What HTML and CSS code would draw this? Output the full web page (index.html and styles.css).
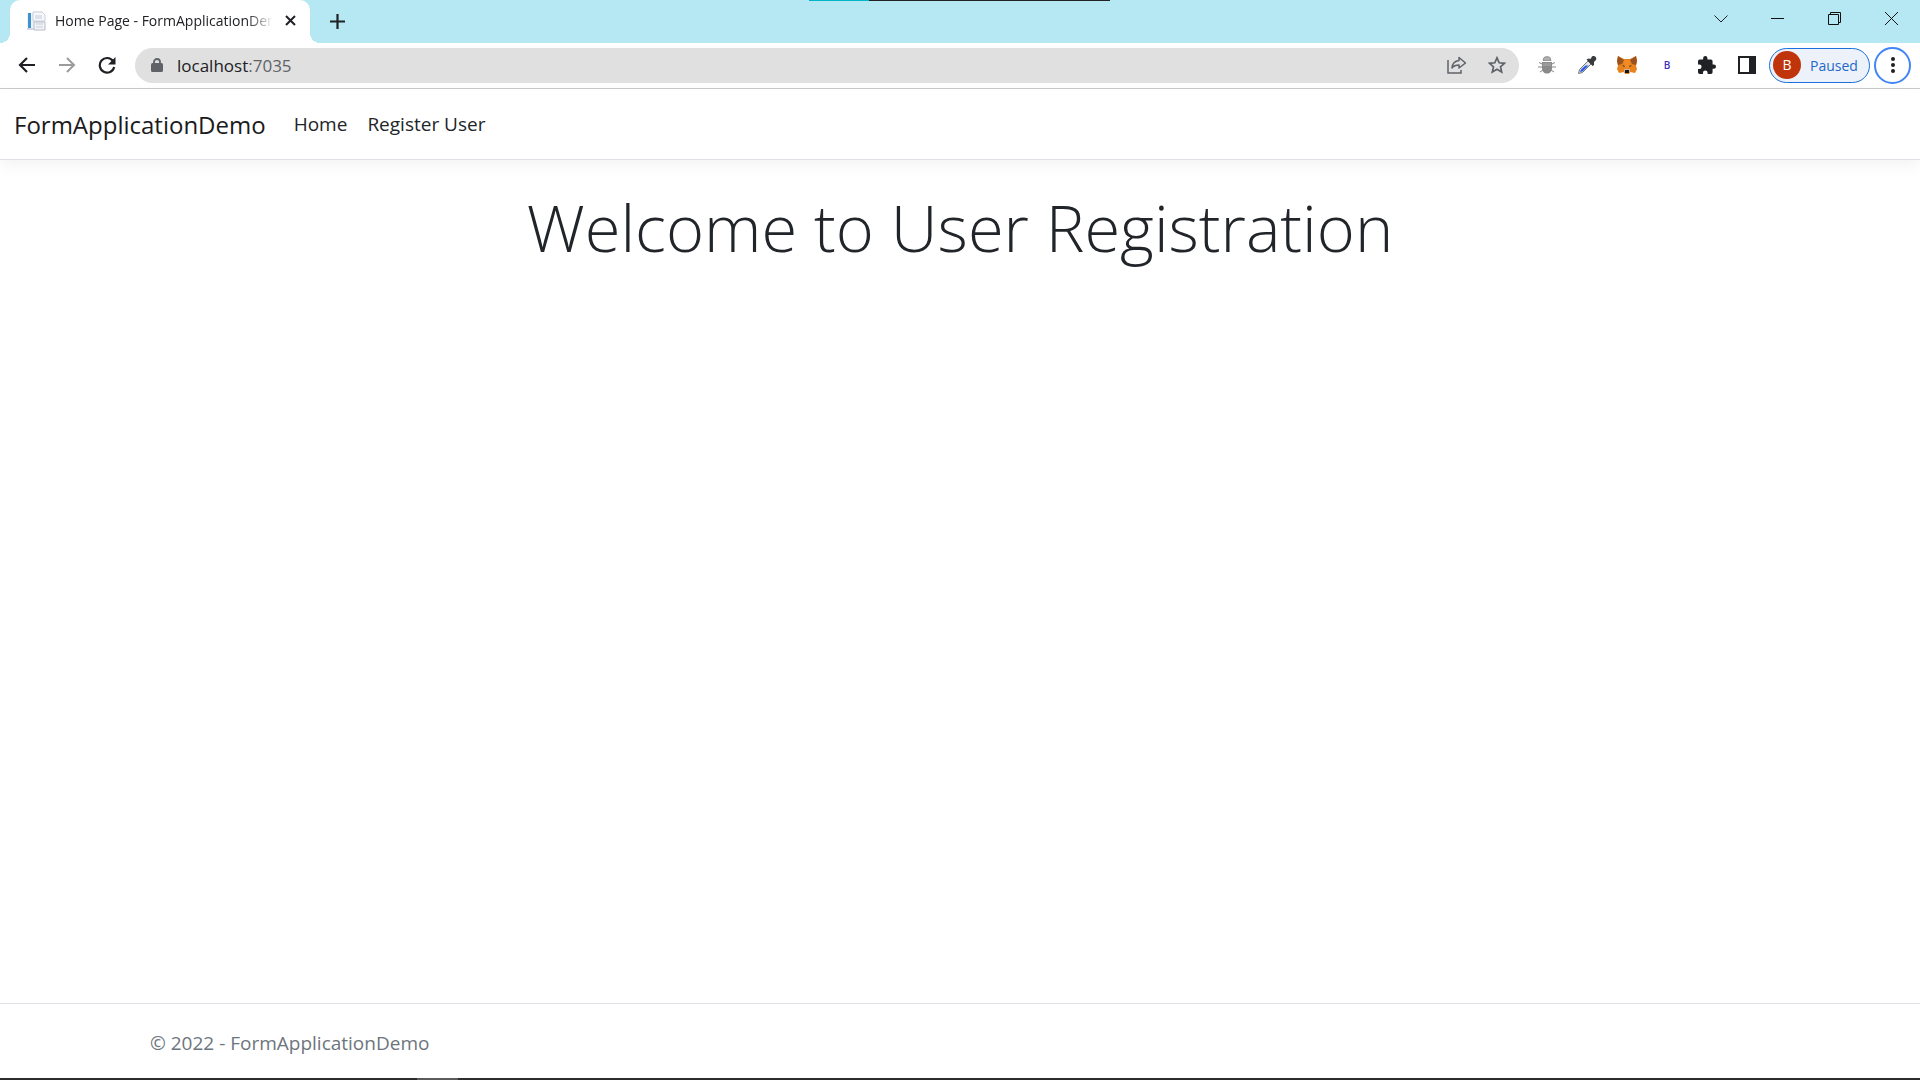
FILE: index.html
```html
<!DOCTYPE html>
<html lang="en">
<head>
<meta charset="utf-8">
<title>Home Page - FormApplicationDemo</title>
<link rel="stylesheet" href="styles.css">
</head>
<body>
<div class="tabstrip">
  <div class="tab">
    <svg class="favicon" width="20" height="20" viewBox="0 0 20 20"><path d="M0 2h7V0h9l3 3v16H1V2z" fill="#eef1f6"/><path d="M2 2h3v15H2z" fill="#3f91d0"/><path d="M7 1h9l3 3v6H7z" fill="#f7f8fb" stroke="#cbd0dc"/><path d="M9 5h7M9 7h7" stroke="#c3cad8"/><path d="M8 11h11v8H8z" fill="#f3f4f7" stroke="#b8bdca"/><path d="M10 13h7M10 16h7" stroke="#c6ccd8"/><path d="M1 18h7" stroke="#b9c0cf"/></svg>
    <span class="tab-title">Home Page - FormApplicationDemo</span>
    <button class="icon-btn tab-close" aria-label="Close tab"><svg width="11" height="11" viewBox="0 0 11 11"><path d="M1 1l9 9M10 1l-9 9" stroke="#202124" stroke-width="2"/></svg></button>
  </div>
  <button class="icon-btn new-tab" aria-label="New tab"><svg width="15" height="15" viewBox="0 0 15 15"><path d="M7.500 0v15M0 7.500h15" stroke="#202124" stroke-width="2.200"/></svg></button>
  <div class="recorder"></div>
  <div class="window-controls">
    <button class="icon-btn caption" aria-label="Search tabs"><svg width="14" height="8" viewBox="0 0 14 8"><path d="M.5.5L7 7l6.500-6.500" fill="none" stroke="#222"/></svg></button>
    <button class="icon-btn caption" aria-label="Minimize"><svg width="13" height="13" viewBox="0 0 13 13"><path d="M0 6.500h13" stroke="#111"/></svg></button>
    <button class="icon-btn caption" aria-label="Restore"><svg width="13" height="13" viewBox="0 0 13 13"><path d="M.5 2.500h10v10H.5zM2.500 2V.5h10v10H11" fill="none" stroke="#111"/></svg></button>
    <button class="icon-btn caption" aria-label="Close"><svg width="13" height="13" viewBox="0 0 13 13"><path d="M0 0l13 13M13 0L0 13" stroke="#111"/></svg></button>
  </div>
</div>
<div class="toolbar">
  <button class="icon-btn tool" aria-label="Back"><svg width="18" height="16" viewBox="0 0 18 16"><path d="M17 8H2M9 1L2 8l7 7" fill="none" stroke="#202124" stroke-width="2.200"/></svg></button>
  <button class="icon-btn tool" aria-label="Forward"><svg width="18" height="16" viewBox="0 0 18 16"><path d="M1 8h15M9 1l7 7-7 7" fill="none" stroke="#9b9c9e" stroke-width="2"/></svg></button>
  <button class="icon-btn tool" aria-label="Reload"><svg width="18" height="18" viewBox="0 0 18 18"><path d="M15 5a7.300 7.300 0 1 0 1.200 6" fill="none" stroke="#202124" stroke-width="2.200"/><path d="M17.500 1v7.500H10z" fill="#202124"/></svg></button>
  <div class="omnibox">
    <svg width="12" height="15" viewBox="0 0 12 15"><rect y="5" width="12" height="9" rx="1.500" fill="#5f6368"/><path d="M3 6V4a3 3 0 0 1 6 0v2" fill="none" stroke="#5f6368" stroke-width="1.800"/></svg>
    <div class="address">localhost<span class="port">:7035</span></div>
    <button class="icon-btn tool" aria-label="Share"><svg width="20" height="18" viewBox="0 0 20 18"><path d="M1 4v13h13v-3" fill="none" stroke="#5f6368" stroke-width="1.500"/><path d="M12 1.500L18.500 7 12 12V9c-3.500 0-5.500 1-7 3 .3-4 2.500-7 7-7.500z" fill="none" stroke="#5f6368" stroke-width="1.500" stroke-linejoin="round"/></svg></button>
    <button class="icon-btn tool" aria-label="Bookmark this tab"><svg width="18" height="18" viewBox="0 0 18 18"><path d="M9 1.800l2.200 5 5.300.5-4 3.500 1.200 5.300L9 13.300l-4.700 2.800 1.200-5.300-4-3.500 5.300-.5z" fill="none" stroke="#5f6368" stroke-width="1.700"/></svg></button>
  </div>
  <div class="extensions">
    <button class="icon-btn tool" aria-label="Debugger"><svg width="18" height="18" viewBox="0 0 18 18"><path d="M5 4.500a4 4 0 0 1 8 0z" fill="#b0b0b0" stroke="#888" stroke-width=".8"/><path d="M4 8L1 6.500M4 11H0M5 14l-3 2M14 8l3-1.500M14 11h4M13 14l3 2" stroke="#858585"/><path d="M4 6h10v5.500c0 4-2 6-5 6s-5-2-5-6z" fill="#8a8a8a"/><path d="M5 7h8v3H5z" fill="#9c9c9c"/></svg></button>
    <button class="icon-btn tool" aria-label="Color picker"><svg width="20" height="20" viewBox="0 0 20 20"><path d="M1.500 18.500l1-4L11 6l3 3-8.500 8.500z" fill="#dfe5ef" stroke="#777"/><path d="M3 17l1-2.500L8.500 10.500h3L5.500 16.500z" fill="#2859e0"/><path d="M9.500 4.500l2-1 2 .5L15 1.500c2-1.500 5 .5 4.200 3.200L17 7v3l-1.500 1z" fill="#3a3b3d"/></svg></button>
    <button class="icon-btn tool" aria-label="MetaMask"><svg width="20" height="18" viewBox="0 0 20 18"><path d="M1 0l6 3h6l6-3 1 5-1 5 1 3-2 4-5-1-1 2H8l-1-2-5 1-2-4 1-3-1-5z" fill="#e8821e"/><path d="M1 0l6 4-2 4-4 1-1-4zM19 0l-6 4 2 4 4 1 1-4z" fill="#9a5220"/><path d="M7 4h6l-1 8H8z" fill="#f28b25"/><path d="M5 9l3 1-1 1zM15 9l-3 1 1 1z" fill="#423528"/><path d="M7 13h6v3H7z" fill="#d5b29b"/><path d="M8 14h4v3H8z" fill="#161616"/></svg></button>
    <button class="icon-btn tool letter">B</button>
    <button class="icon-btn tool" aria-label="Extensions"><svg width="18" height="18" viewBox="2 1 21 21"><path d="M20.500 11H19V7a2 2 0 0 0-2-2h-4V3.500a2.500 2.500 0 0 0-5 0V5H4a2 2 0 0 0-2 2v3.800h1.500a2.700 2.700 0 0 1 0 5.400H2V20a2 2 0 0 0 2 2h3.800v-1.500a2.700 2.700 0 0 1 5.400 0V22H17a2 2 0 0 0 2-2v-4h1.500a2.500 2.500 0 0 0 0-5z" fill="#202124"/></svg></button>
    <button class="icon-btn tool" aria-label="Side panel"><svg width="18" height="18" viewBox="0 0 18 18"><path d="M1 1h16v16H1z" fill="#fff" stroke="#202124" stroke-width="2"/><path d="M11 0h7v18h-7z" fill="#202124"/></svg></button>
  </div>
  <button class="profile"><span class="avatar">B</span>Paused</button>
  <button class="icon-btn menu" aria-label="Menu"><svg width="4" height="16" viewBox="0 0 4 16"><g fill="#202124"><circle cx="2" cy="2" r="2"/><circle cx="2" cy="8" r="2"/><circle cx="2" cy="14" r="2"/></g></svg></button>
</div>
<header>
  <nav class="navbar">
    <a class="brand" href="#">FormApplicationDemo</a>
    <a class="nav-link" href="#">Home</a>
    <a class="nav-link" href="#">Register User</a>
  </nav>
</header>
<main>
  <h1>Welcome to User Registration</h1>
</main>
<footer>
  <div class="container">© 2022 - FormApplicationDemo</div>
</footer>
<div class="taskbar"><div class="task-active"></div></div>
</body>
</html>
```
FILE: styles.css
```css
* { box-sizing: border-box; }
body {
  margin: 0;
  min-height: 100vh;
  display: flex;
  flex-direction: column;
  background: #fff;
  color: #212529;
  font-family: "Open Sans", "Noto Sans", sans-serif;
  font-size: 19px;
}
a { color: inherit; text-decoration: none; }
svg { display: block; flex: none; }
button { font: inherit; }
.icon-btn {
  display: flex;
  align-items: center;
  justify-content: center;
  flex: none;
  padding: 0;
  border: 0;
  background: none;
}

/* Tab strip */
.tabstrip {
  position: relative;
  display: flex;
  height: 43px;
  padding-left: 10px;
  background: #b5e8f3;
}
.tab {
  position: relative;
  display: flex;
  align-items: center;
  width: 300px;
  padding: 0 14px 2px 16px;
  border-radius: 10px 10px 0 0;
  background: #fff;
}
.tab::before,
.tab::after {
  content: "";
  position: absolute;
  bottom: 0;
  width: 10px;
  height: 10px;
}
.tab::before { right: 100%; background: radial-gradient(circle at 0 0, transparent 10px, #fff 10px); }
.tab::after { left: 100%; background: radial-gradient(circle at 100% 0, transparent 10px, #fff 10px); }
.tab-title {
  width: 218px;
  margin-left: 9px;
  overflow: hidden;
  white-space: nowrap;
  font-size: 14px;
  color: #202124;
  mask-image: linear-gradient(to right, #000 88%, transparent);
}
.tab-close { margin-left: auto; }
.new-tab { width: 34px; margin-left: 10px; }
.recorder {
  position: absolute;
  top: 0;
  left: 809px;
  width: 301px;
  height: 1px;
  background: linear-gradient(to right, #00b4c8 60px, #222 60px);
}
.window-controls { display: flex; height: 37px; margin-left: auto; }
.caption { width: 57px; }

/* Toolbar */
.toolbar {
  display: flex;
  align-items: center;
  height: 46px;
  padding: 0 9px 1px 7px;
  border-bottom: 1px solid #c9cacb;
}
.tool { width: 40px; height: 34px; }
.omnibox {
  display: flex;
  align-items: center;
  flex: 1;
  height: 35px;
  margin-left: 8px;
  padding: 0 2px 0 16px;
  border-radius: 18px;
  background: #e0e0e0;
}
.address { flex: 1; margin-left: 14px; font-size: 17px; color: #202124; }
.port { color: #5f6368; }
.extensions { display: flex; margin: 0 2px 0 8px; }
.letter { font-size: 10px; font-weight: 600; color: #4030b8; }
.profile {
  display: flex;
  align-items: center;
  width: 101px;
  height: 35px;
  padding: 0 0 0 3px;
  border: 1px solid #1a6fdc;
  border-radius: 18px;
  background: #edf2fa;
  font-size: 14px;
  color: #2467c9;
}
.avatar {
  width: 28px;
  height: 28px;
  margin-right: 9px;
  border-radius: 50%;
  background: #c0340b;
  color: #fff;
  line-height: 28px;
  text-align: center;
}
.menu {
  width: 37px;
  height: 37px;
  margin-left: 4px;
  border: 2px solid #4285f4;
  border-radius: 50%;
}

/* Page */
.navbar {
  display: flex;
  align-items: center;
  gap: 20px;
  height: 71px;
  padding: 0 14px;
  border-bottom: 1px solid #dee2e6;
  box-shadow: 0 5px 15px rgba(0, 0, 0, .05);
}
.brand { margin-right: 8px; font-size: 24px; color: #1b1b1b; }
main { flex: 1; padding-top: 20px; text-align: center; }
h1 { margin: 0; font-size: 65px; font-weight: 300; line-height: 94px; }
footer {
  padding: 20px 0 16px;
  border-top: 1px solid #dee2e6;
  color: #6c757d;
  line-height: 38px;
}
.container { max-width: 1650px; margin: 0 auto; padding: 0 15px; }
.taskbar { height: 2px; background: #2e2c2d; }
.task-active { width: 41px; height: 2px; margin-left: 417px; background: #5c5a5b; }
```
